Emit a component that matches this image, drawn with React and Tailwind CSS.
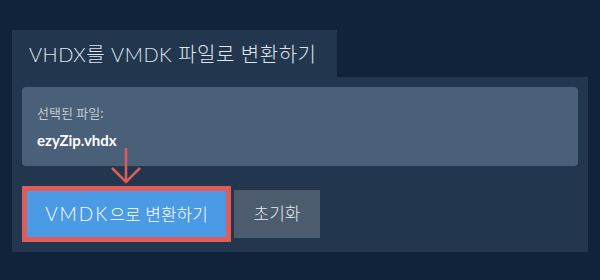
import React, { useState } from 'react';

const font = { fontFamily: '"Lato", "Noto Sans CJK KR", sans-serif' };

const App = () => {
  const [fileName, setFileName] = useState('ezyZip.vhdx');

  return (
    <div
      className="w-[600px] h-[280px] bg-[#11233a] pt-[30px] pl-[12px] font-['Lato','Noto_Sans_CJK_KR',sans-serif]"
      style={font}
    >
      {/* tab header */}
      <div className="w-[325px] h-[47px] bg-[#22364d] flex items-center pl-[17px]">
        <h2 className="text-[20px] text-[#dfe6ee] font-light tracking-[0.5px] leading-none">
          VHDX를 VMDK 파일로 변환하기
        </h2>
      </div>

      {/* panel */}
      <div className="w-[576px] bg-[#22364d] p-[10px]">
        <div className="h-[79px] bg-[#4a5f78] rounded-[4px] pl-[15px] pt-[17px]">
          <p className="text-[13px] text-[#bfc8d3] leading-[18px]">선택된 파일:</p>
          <p className="text-[15px] text-white font-bold leading-[18px] mt-[9px]">{fileName}</p>
        </div>

        <div className="relative flex items-center gap-[3px] mt-[20px]">
          {/* arrow pointing to the convert button */}
          <svg
            className="absolute left-[89px] top-[-39px]"
            width="30"
            height="38"
            viewBox="0 0 30 38"
            fill="none"
            stroke="#e05c58"
            strokeWidth="2.5"
          >
            <line x1="15" y1="1" x2="15" y2="35" />
            <polyline points="1,21 15,35 29,21" />
          </svg>

          <div className="border-[5px] border-[#e05c58]">
            <button className="w-[199px] h-[46px] bg-[#4a9ae6] text-white text-[17px] font-light">
              <span className="text-[19px] tracking-[2px]">VMDK</span>으로 변환하기
            </button>
          </div>
          <button
            onClick={() => setFileName('')}
            className="w-[86px] h-[48px] bg-[#4c5c6e] text-[#e6ebf0] text-[17px] font-light"
          >
            초기화
          </button>
        </div>
      </div>
    </div>
  );
};

export default App;
